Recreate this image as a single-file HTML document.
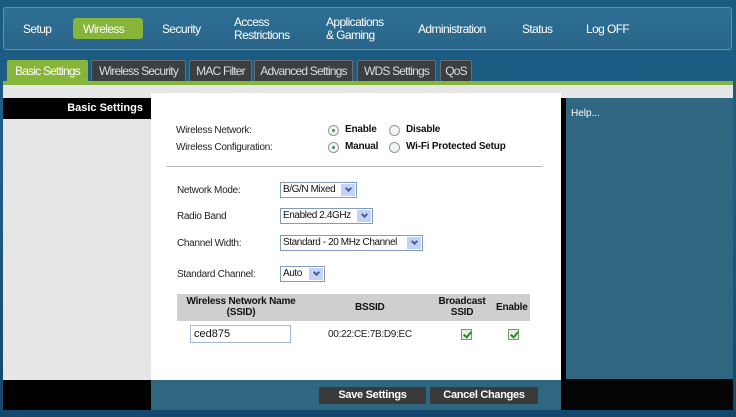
<!DOCTYPE html>
<html><head><style>
*{margin:0;padding:0;box-sizing:border-box}
body{width:736px;height:417px;overflow:hidden;background:linear-gradient(180deg,#1b5b82 0%,#1e5f86 40%,#14476c 100%);font-family:"Liberation Sans",Arial,sans-serif;position:relative}
.a{position:absolute}
.nav{left:3px;top:7px;width:729px;height:43px;border:1px solid #5b93b4;border-radius:3px;background:linear-gradient(#2e6f95,#2a6589)}
.n{position:absolute;color:#fff;font-size:12px;line-height:13px;letter-spacing:-0.6px}
.tab{position:absolute;top:60px;height:21px;background:#3b3f42;border:1px solid #6a6e70;border-bottom:none;color:#ddd;font-size:12px;line-height:20px;text-align:center;letter-spacing:-0.8px;border-radius:2px 2px 0 0;white-space:nowrap;overflow:hidden}
.lbl{position:absolute;font-size:10px;color:#222;letter-spacing:-0.3px}
.sel{position:absolute;height:16px;border:1px solid #7f9db9;background:#fff;font-size:10px;line-height:14px;padding-left:2px;color:#111;letter-spacing:-0.4px;white-space:nowrap}
.sel:after{content:"";position:absolute;right:1px;top:1px;width:14px;height:12px;background:#c1d3fb}
.sel i{position:absolute;right:5px;top:3px;width:5px;height:5px;border-right:2px solid #4d6185;border-bottom:2px solid #4d6185;transform:rotate(45deg);z-index:2}
.rad{position:absolute;width:11px;height:11px;border-radius:50%;border:1px solid #8a9aa8;background:#f4f4f4}
.rad.on:after{content:"";position:absolute;left:3px;top:3px;width:3px;height:3px;border-radius:50%;background:#3a9a3a}
.b{position:absolute;font-size:10px;font-weight:bold;color:#111;letter-spacing:-0.2px}
.cb{position:absolute;width:11px;height:11px;border:1px solid #7b9a6b;background:#e6f0e0}
.cb:after{content:"";position:absolute;left:3px;top:0;width:3px;height:6px;border-right:2px solid #2a8a2a;border-bottom:2px solid #2a8a2a;transform:rotate(40deg)}
.btn{position:absolute;top:387px;height:17px;background:#3a3a3a;color:#fff;font-size:11px;font-weight:bold;text-align:center;line-height:17px;letter-spacing:-0.3px}
</style></head><body>
<div class="a nav"></div>
<div class="a" style="left:73px;top:18px;width:70px;height:21px;background:#86b53a;border-radius:3px"></div>
<div class="n" style="left:23px;top:23px">Setup</div>
<div class="n" style="left:83px;top:23px">Wireless</div>
<div class="n" style="left:162px;top:23px">Security</div>
<div class="n" style="left:234px;top:16px">Access<br>Restrictions</div>
<div class="n" style="left:326px;top:16px">Applications<br>&amp; Gaming</div>
<div class="n" style="left:418px;top:23px">Administration</div>
<div class="n" style="left:522px;top:23px">Status</div>
<div class="n" style="left:586px;top:23px">Log OFF</div>

<div class="tab" style="left:7px;width:81px;background:#86b53a;border-color:#86b53a;color:#fff">Basic Settings</div>
<div class="tab" style="left:91px;width:95px">Wireless Security</div>
<div class="tab" style="left:189px;width:63px">MAC Filter</div>
<div class="tab" style="left:254px;width:99px">Advanced Settings</div>
<div class="tab" style="left:357px;width:79px">WDS Settings</div>
<div class="tab" style="left:440px;width:32px">QoS</div>
<div class="a" style="left:3px;top:81px;width:730px;height:4px;background:#86b53a"></div>
<div class="a" style="left:3px;top:85px;width:730px;height:13px;background:#e6e6e6"></div>

<div class="a" style="left:3px;top:98px;width:148px;height:282px;background:#e6e6e6"></div>
<div class="a" style="left:3px;top:98px;width:148px;height:21px;background:#000;color:#fff;font-size:11px;font-weight:bold;text-align:right;padding-right:8px;line-height:21px">Basic Settings</div>
<div class="a" style="left:3px;top:380px;width:148px;height:30px;background:#000"></div>

<div class="a" style="left:151px;top:93px;width:410px;height:287px;background:#fff"></div>
<div class="a" style="left:151px;top:380px;width:410px;height:30px;background:#2f6680"></div>
<div class="a" style="left:561px;top:98px;width:5px;height:312px;background:#000"></div>
<div class="a" style="left:566px;top:98px;width:167px;height:281px;background:#2f6680"></div>
<div class="a" style="left:566px;top:379px;width:167px;height:31px;background:#050505"></div>
<div class="a" style="left:571px;top:108px;color:#fff;font-size:10px">Help...</div>

<div class="lbl" style="left:176px;top:125px">Wireless Network:</div>
<div class="lbl" style="left:176px;top:142px">Wireless Configuration:</div>
<div class="rad on" style="left:328px;top:125px"></div><div class="b" style="left:345px;top:124px">Enable</div>
<div class="rad" style="left:389px;top:125px"></div><div class="b" style="left:406px;top:124px">Disable</div>
<div class="rad on" style="left:328px;top:142px"></div><div class="b" style="left:345px;top:141px">Manual</div>
<div class="rad" style="left:389px;top:142px"></div><div class="b" style="left:406px;top:141px">Wi-Fi Protected Setup</div>
<div class="a" style="left:166px;top:166px;width:377px;height:1px;background:#bbb"></div>

<div class="lbl" style="left:177px;top:185px">Network Mode:</div>
<div class="sel" style="left:280px;top:182px;width:77px">B/G/N Mixed<i></i></div>
<div class="lbl" style="left:177px;top:211px">Radio Band</div>
<div class="sel" style="left:280px;top:208px;width:93px">Enabled 2.4GHz<i></i></div>
<div class="lbl" style="left:177px;top:238px">Channel Width:</div>
<div class="sel" style="left:280px;top:235px;width:143px">Standard - 20 MHz Channel<i></i></div>
<div class="lbl" style="left:177px;top:269px">Standard Channel:</div>
<div class="sel" style="left:280px;top:266px;width:45px">Auto<i></i></div>

<div class="a" style="left:177px;top:294px;width:353px;height:27px;background:#cfcfcf"></div>
<div class="b" style="left:177px;top:296px;width:128px;text-align:center;line-height:11px">Wireless Network Name<br>(SSID)</div>
<div class="b" style="left:355px;top:302px">BSSID</div>
<div class="b" style="left:432px;top:296px;width:60px;text-align:center;line-height:11px">Broadcast<br>SSID</div>
<div class="b" style="left:496px;top:302px">Enable</div>
<div class="a" style="left:190px;top:325px;width:101px;height:18px;border:1px solid #a5b9cc;font-size:11px;line-height:16px;padding-left:3px;color:#111">ced875</div>
<div class="lbl" style="left:328px;top:329px">00:22:CE:7B:D9:EC</div>
<div class="cb" style="left:461px;top:329px"></div>
<div class="cb" style="left:508px;top:329px"></div>

<div class="btn" style="left:319px;width:107px">Save Settings</div>
<div class="btn" style="left:430px;width:108px">Cancel Changes</div>
</body></html>
